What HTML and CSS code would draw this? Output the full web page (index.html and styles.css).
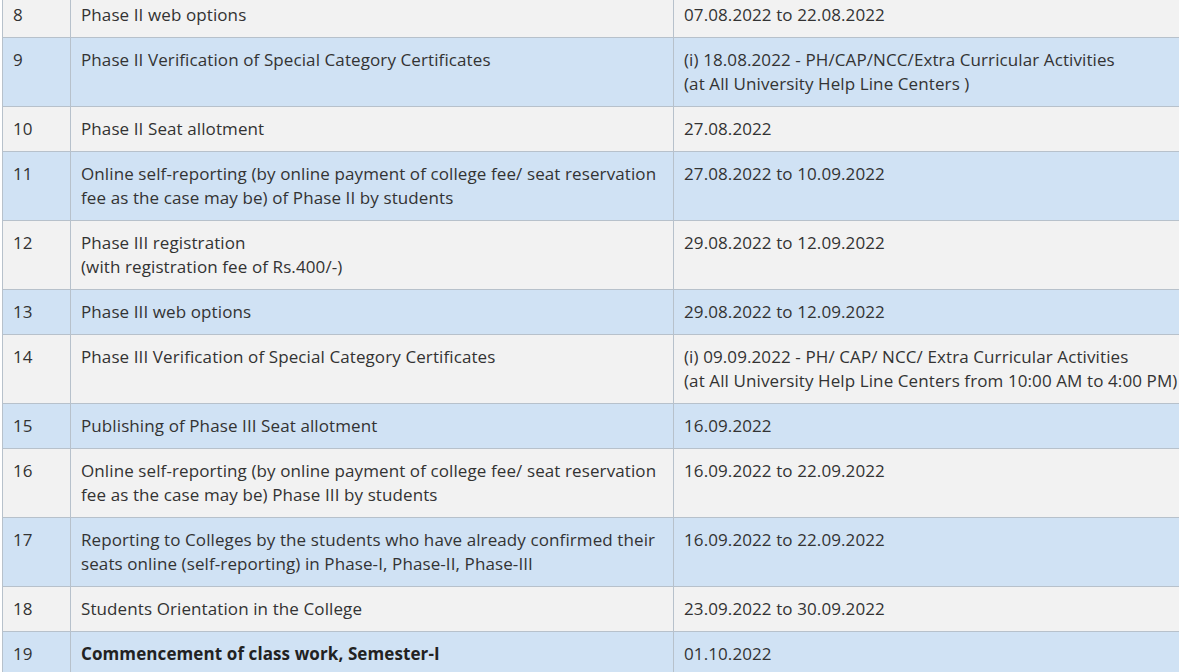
FILE: index.html
```html
<!DOCTYPE html>
<html>
<head>
<meta charset="utf-8">
<link rel="stylesheet" href="styles.css">
</head>
<body>
<div class="wrap">
<table class="schedule">
<colgroup><col class="c-no"><col class="c-event"><col class="c-date"></colgroup>
<tbody>
<tr class="odd"><td>8</td><td>Phase II web options</td><td>07.08.2022 to 22.08.2022</td></tr>
<tr class="even"><td>9</td><td>Phase II Verification of Special Category Certificates</td><td>(i) 18.08.2022 - PH/CAP/NCC/Extra Curricular Activities<br>(at All University Help Line Centers )</td></tr>
<tr class="odd"><td>10</td><td>Phase II Seat allotment</td><td>27.08.2022</td></tr>
<tr class="even"><td>11</td><td>Online self-reporting (by online payment of college fee/ seat reservation<br>fee as the case may be) of Phase II by students</td><td>27.08.2022 to 10.09.2022</td></tr>
<tr class="odd"><td>12</td><td>Phase III registration<br>(with registration fee of Rs.400/-)</td><td>29.08.2022 to 12.09.2022</td></tr>
<tr class="even"><td>13</td><td>Phase III web options</td><td>29.08.2022 to 12.09.2022</td></tr>
<tr class="odd"><td>14</td><td>Phase III Verification of Special Category Certificates</td><td>(i) 09.09.2022 - PH/ CAP/ NCC/ Extra Curricular Activities<br>(at All University Help Line Centers from 10:00 AM to 4:00 PM)</td></tr>
<tr class="even"><td>15</td><td>Publishing of Phase III Seat allotment</td><td>16.09.2022</td></tr>
<tr class="odd"><td>16</td><td>Online self-reporting (by online payment of college fee/ seat reservation<br>fee as the case may be) Phase III by students</td><td>16.09.2022 to 22.09.2022</td></tr>
<tr class="even"><td>17</td><td>Reporting to Colleges by the students who have already confirmed their<br>seats online (self-reporting) in Phase-I, Phase-II, Phase-III</td><td>16.09.2022 to 22.09.2022</td></tr>
<tr class="odd"><td>18</td><td>Students Orientation in the College</td><td>23.09.2022 to 30.09.2022</td></tr>
<tr class="even"><td>19</td><td><strong>Commencement of class work, Semester-I</strong></td><td>01.10.2022</td></tr>
</tbody>
</table>
</div>
</body>
</html>
```
FILE: styles.css
```css
html, body {
  margin: 0;
  padding: 0;
  background: #ffffff;
  overflow: hidden;
}
.wrap {
  margin-top: -8px;
  padding-left: 2px;
}
.schedule {
  border-collapse: collapse;
  table-layout: fixed;
  width: 1200px;
  font-family: "Open Sans", "Noto Sans", sans-serif;
  font-size: 17px;
  letter-spacing: 0.1px;
  line-height: 24px;
  color: #333333;
}
.c-no { width: 68px; }
.c-event { width: 603px; }
.schedule td {
  border: 1px solid #b7c1cb;
  padding: 10px 10px;
  vertical-align: top;
  white-space: nowrap;
}
.schedule strong { font-weight: 700; color: #222; }
.odd td { background: #f2f2f2; }
.even td { background: #d0e2f4; }
```
